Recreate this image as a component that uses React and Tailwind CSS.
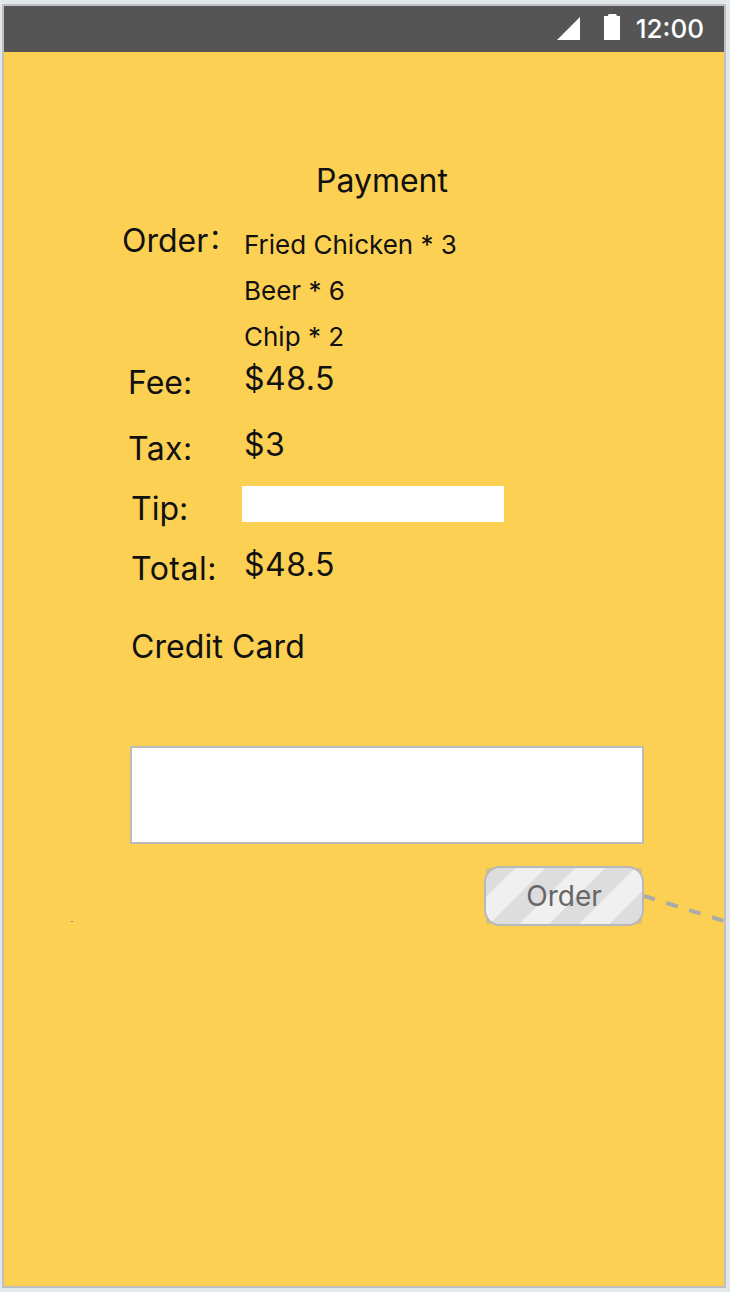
import React from "react";

function Row({ label, labelClass = "", className, children }) {
  return (
    <div className={`flex items-start ${className}`}>
      <div className={`w-[122px] shrink-0 whitespace-nowrap ${labelClass}`}>{label}</div>
      {children}
    </div>
  );
}

function StatusBar() {
  return (
    <div className="flex h-[46px] shrink-0 items-start justify-end bg-[#555555] pr-5 text-white">
      <svg className="mt-[11px] mr-6 h-[23px] w-[23px]" viewBox="0 0 23 23" fill="currentColor">
        <path d="M23 0V23H0Z" />
      </svg>
      <svg className="mt-2 mr-4 h-[26px] w-4" viewBox="0 0 16 26" fill="currentColor">
        <path d="M4 1L5 0H12L13 2H16V26H0V2H4Z" />
      </svg>
      <span className="mt-[7px] text-[26px] leading-8 font-medium">12:00</span>
    </div>
  );
}

function OrderButton() {
  return (
    <button className="relative block h-[60px] w-[160px]">
      <svg className="block h-[60px] w-[160px]" viewBox="0 0 160 60">
        <defs>
          <clipPath id="face">
            <rect x="1" y="1" width="158" height="58" rx="15" />
          </clipPath>
        </defs>
        <rect x="2" y="2" width="156" height="56" fill="#d6c27c" />
        <g clipPath="url(#face)">
          <rect width="160" height="60" fill="#dddddd" />
          <path
            fill="#f0f0f0"
            d="M33.3 0h30l-60 60h-30zM93.3 0h30l-60 60h-30zM153.3 0h30l-60 60h-30z"
          />
        </g>
        <rect x="1" y="1" width="158" height="58" rx="15" fill="none" stroke="#b8b8b8" strokeWidth="2" />
      </svg>
      <span className="absolute inset-0 text-center text-[28px] leading-[60px] text-[#666666]">Order</span>
    </button>
  );
}

export default function App() {
  return (
    <div className="h-[1292px] w-[730px] bg-[#e2e8ea] pt-1 pl-0.5 font-['Inter','Noto_Sans_CJK_SC',sans-serif]">
      <div className="flex h-[1284px] w-[724px] flex-col border-2 border-[#c0c0c3] bg-[#fcd053] text-[32px] leading-10 text-[#111111]">
        <StatusBar />
        <main className="flex flex-col pt-[109px] pl-[118px]">
          <h1 className="h-[60px] pl-[194px]">Payment</h1>
          <Row
            label={<>Order<span className="align-[3px] text-[28px] leading-none">：</span></>}
            className="h-[138px]"
          >
            <ul className="pt-px text-[26px] leading-[46px]">
              <li>Fried Chicken * 3</li>
              <li>Beer * 6</li>
              <li>Chip * 2</li>
            </ul>
          </Row>
          <Row label="Fee:" labelClass="pt-1 pl-1.5" className="h-[66px]">
            <span className="tracking-[0.5px]">$48.5</span>
          </Row>
          <Row label="Tax:" labelClass="pt-1 pl-1.5 tracking-[0.4px]" className="h-[61px]">
            <span className="tracking-[0.5px]">$3</span>
          </Row>
          <Row label="Tip:" labelClass="pt-[3px] pl-[9px]" className="h-[59px]">
            <input className="-ml-0.5 h-9 w-[262px] bg-white" />
          </Row>
          <Row label="Total:" labelClass="pt-1 pl-[9px] tracking-[0.5px]" className="h-[82px]">
            <span className="tracking-[0.5px]">$48.5</span>
          </Row>
          <h2 className="h-[119px] pl-[9px] tracking-[0.1px]">Credit Card</h2>
          <input className="ml-2 h-[98px] w-[514px] border-2 border-[#bbbbbb] bg-white" />
          <div className="flex pt-[22px]">
            <svg className="mt-[55px] ml-[-51px] h-[2px] w-[2px]" viewBox="0 0 2 2">
              <path d="M0 0h2v1H0z" fill="#8a8274" />
            </svg>
            <div className="ml-[411px]">
              <OrderButton />
            </div>
            <svg className="mt-[26px] h-8 w-20" viewBox="0 0 80 32">
              <path d="M0 4L80 29" stroke="#aaaaaa" strokeWidth="4" strokeDasharray="12 12" strokeDashoffset="0.7" />
            </svg>
          </div>
        </main>
      </div>
    </div>
  );
}
